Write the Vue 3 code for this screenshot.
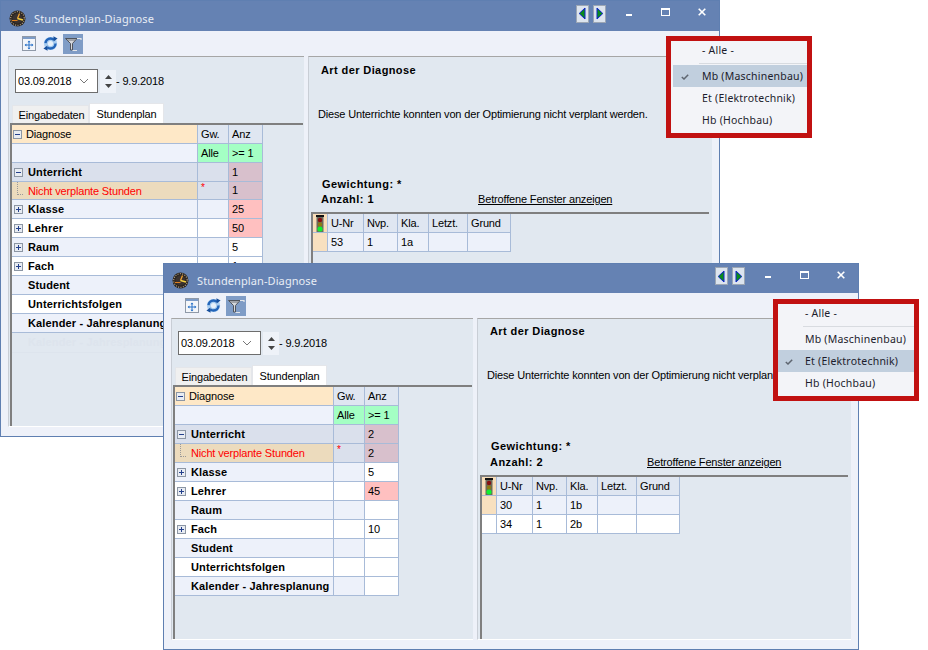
<template>
  <div class="desk">
    <div v-for="win in windows" :key="win.id" class="win" :class="win.id">
      <div class="titlebar">
        <svg class="logo" width="17" height="17" viewBox="0 0 17 17">
          <circle cx="8.5" cy="8.5" r="8" fill="#2b2520" />
          <circle cx="8.5" cy="8.5" r="6.8" fill="none" stroke="#b8a488" stroke-width="1.2" stroke-dasharray="1 1.4" />
          <circle cx="8.5" cy="8.5" r="5" fill="#3a3230" />
          <path d="M8.5 8.5 L10.5 3.5" stroke="#f0a030" stroke-width="1.3" />
          <path d="M8.5 8.5 L14 10" stroke="#f4d040" stroke-width="1.4" />
          <path d="M3 10.5 L8.5 10.5" stroke="#e08020" stroke-width="1" />
        </svg>
        <span class="title">Stundenplan-Diagnose</span>
        <button class="nav">
          <svg width="9" height="13" viewBox="0 0 9 13"><path d="M7 1 V12 L1.2 6.5 Z" fill="#0a8a1e" stroke="#1020d0" /></svg>
        </button>
        <button class="nav second">
          <svg width="9" height="13" viewBox="0 0 9 13"><path d="M2 1 V12 L7.8 6.5 Z" fill="#0a8a1e" stroke="#1020d0" /></svg>
        </button>
        <span class="ctl-min"></span>
        <span class="ctl-max"></span>
        <svg class="ctl-close" width="8" height="8" viewBox="0 0 8 8">
          <path d="M.7 .7 L7.3 7.3 M7.3 .7 L.7 7.3" stroke="#fff" stroke-width="1.6" />
        </svg>
      </div>

      <div class="toolbar">
        <svg class="tool" width="14" height="15" viewBox="0 0 14 15">
          <rect x=".5" y=".5" width="13" height="14" fill="#f4f6fa" stroke="#8f99a8" />
          <rect x="1" y="1" width="12" height="2" fill="#7d9cc8" />
          <path d="M7 5 V13 M3.2 9 H10.8" stroke="#2a72c8" />
          <path d="M7 4.4 L5.5 6.2 H8.5 Z M7 13.6 L5.5 11.8 H8.5 Z M2.6 9 L4.4 7.5 V10.5 Z M11.4 9 L9.6 7.5 V10.5 Z" fill="#2a72c8" />
        </svg>
        <svg class="tool refresh" width="15" height="15" viewBox="0 0 15 15">
          <circle cx="7.5" cy="7.5" r="6.6" fill="#a9cdf0" />
          <circle cx="7.5" cy="7.5" r="5" fill="none" stroke="#2364b8" stroke-width="2.4" stroke-dasharray="11 4.7" />
          <path d="M10.4 .2 L14.6 2.6 L10.6 5.6 Z M4.6 14.8 L.4 12.4 L4.4 9.4 Z" fill="#174f9c" />
          <circle cx="7.5" cy="7.5" r="2.6" fill="#e6f0fa" />
        </svg>
        <span class="tool-on">
          <svg width="18" height="18" viewBox="0 0 18 18">
            <path d="M1.5 3.5 H13 L8.5 8.5 V15 H6.5 V8.5 Z" fill="#d6d8dc" stroke="#50545c" />
            <path d="M13 3.5 H17 V5 M8.5 15.5 H13" fill="none" stroke="#e4e6ea" stroke-width="1.2" />
            <path d="M3 5 H11.5" stroke="#6a6e76" />
          </svg>
        </span>
      </div>

      <div class="panels">
        <div class="left">
          <div class="dates">
            <div class="combo">
              <span>03.09.2018</span>
              <svg width="10" height="6" viewBox="0 0 10 6"><path d="M1 1 L5 5 L9 1" fill="none" stroke="#777" /></svg>
            </div>
            <div class="spin">
              <svg width="7" height="4" viewBox="0 0 7 4"><path d="M3.5 0 L7 4 H0 Z" fill="#444" /></svg>
              <svg width="7" height="4" viewBox="0 0 7 4"><path d="M3.5 4 L7 0 H0 Z" fill="#444" /></svg>
            </div>
            <span>- 9.9.2018</span>
          </div>
          <div class="tabs">
            <div class="tab">Eingabedaten</div>
            <div class="tab active">Stundenplan</div>
          </div>
          <div class="tree-box">
            <table class="grid tree">
              <colgroup>
                <col class="col-name" />
                <col class="col-gw" />
                <col class="col-anz" />
              </colgroup>
              <tbody>
                <tr class="head">
                  <td class="c-name c-orange"><div class="name top"><span class="tog minus"></span>Diagnose</div></td>
                  <td class="c-soft">Gw.</td>
                  <td class="c-soft">Anz</td>
                </tr>
                <tr class="filter">
                  <td></td>
                  <td class="c-green">Alle</td>
                  <td class="c-green">&gt;= 1</td>
                </tr>
                <tr v-for="(row, i) in win.rows" :key="row.name + i" :class="[row.kind, { odd: i % 2 === 0 }]">
                  <td class="c-name">
                    <div class="name">
                      <span v-if="row.kind === 'child'" class="branch"></span>
                      <span v-else-if="row.tog" class="tog" :class="row.tog"></span>
                      <span v-else class="tog-gap"></span>
                      {{ row.name }}
                    </div>
                  </td>
                  <td class="c-gw">{{ row.gw }}</td>
                  <td class="c-anz" :class="{ hot: row.hot }">{{ row.anz }}</td>
                </tr>
              </tbody>
            </table>
            <div v-if="win.ghost" class="ghost-row">{{ win.ghost }}</div>
          </div>
        </div>

        <div class="right">
          <div class="r-title">Art der Diagnose</div>
          <div class="r-desc">Diese Unterrichte konnten von der Optimierung nicht verplant werden.</div>
          <div class="r-weight">Gewichtung: *</div>
          <div class="r-count">
            <span class="count-label">Anzahl: {{ win.count }}</span>
            <span class="link">Betroffene Fenster anzeigen</span>
          </div>
          <div class="result-box">
            <table class="grid result">
              <tbody>
                <tr class="rhead">
                  <td class="c-light">
                    <svg width="10" height="17" viewBox="0 0 10 17">
                      <rect x="1" y="0" width="8" height="2" fill="#111" />
                      <rect x="1.5" y="2" width="7" height="15" fill="#6a6a5c" />
                      <circle cx="5" cy="5" r="2.2" fill="#8a0f10" />
                      <circle cx="5" cy="9.5" r="2.2" fill="#8d7a12" />
                      <circle cx="5" cy="14" r="2.6" fill="#10f030" />
                    </svg>
                  </td>
                  <td v-for="h in resultHeads" :key="h">{{ h }}</td>
                </tr>
                <tr v-for="(r, i) in win.lessons" :key="r[0]" :class="{ odd: i % 2 === 0 }">
                  <td :class="{ 'c-mark': i === 0 }"></td>
                  <td>{{ r[0] }}</td>
                  <td>{{ r[1] }}</td>
                  <td>{{ r[2] }}</td>
                  <td></td>
                  <td></td>
                </tr>
              </tbody>
            </table>
          </div>
        </div>
      </div>

      <div class="callout">
        <div class="item first">- Alle -</div>
        <div class="sep"></div>
        <div v-for="m in departments" :key="m.code" class="item" :class="{ checked: m.code === win.dept }">
          <svg v-if="m.code === win.dept" class="tick" width="8" height="6" viewBox="0 0 8 6">
            <path d="M.8 3 L3 5 L7.2 .7" fill="none" stroke="#5f6670" stroke-width="1.5" />
          </svg>
          {{ m.label }}
        </div>
      </div>
    </div>
  </div>
</template>

<script setup>
const resultHeads = ['U-Nr', 'Nvp.', 'Kla.', 'Letzt.', 'Grund']

const departments = [
  { code: 'Mb', label: 'Mb (Maschinenbau)' },
  { code: 'Et', label: 'Et (Elektrotechnik)' },
  { code: 'Hb', label: 'Hb (Hochbau)' }
]

const makeRows = (unt, klasse, lehrer, raum, fach) => [
  { name: 'Unterricht', kind: 'group', tog: 'minus', anz: unt },
  { name: 'Nicht verplante Stunden', kind: 'child', gw: '*', anz: unt },
  { name: 'Klasse', tog: 'plus', anz: klasse.v, hot: klasse.hot },
  { name: 'Lehrer', tog: 'plus', anz: lehrer.v, hot: lehrer.hot },
  { name: 'Raum', tog: raum.tog, anz: raum.v },
  { name: 'Fach', tog: 'plus', anz: fach },
  { name: 'Student' },
  { name: 'Unterrichtsfolgen' },
  { name: 'Kalender - Jahresplanung' }
]

const windows = [
  {
    id: 'win-a',
    count: 1,
    dept: 'Mb',
    ghost: 'Kalender - Jahresplanung',
    rows: makeRows(1, { v: 25, hot: true }, { v: 50, hot: true }, { v: 5, tog: 'plus' }, 1),
    lessons: [['53', '1', '1a']]
  },
  {
    id: 'win-b',
    count: 2,
    dept: 'Et',
    rows: makeRows(2, { v: 5 }, { v: 45, hot: true }, { v: '', tog: '' }, 10),
    lessons: [
      ['30', '1', '1b'],
      ['34', '1', '2b']
    ]
  }
]
</script>

<style>
html,
body {
  margin: 0;
  background: #fff;
}
</style>

<style scoped>
.desk {
  position: relative;
  width: 928px;
  height: 650px;
  overflow: hidden;
  font-family: "Liberation Sans", Arial, sans-serif;
  font-size: 11px;
  letter-spacing: -0.16px;
  color: #000;
}

.win {
  position: absolute;
  box-sizing: border-box;
  display: flex;
  flex-direction: column;
  border: 1px solid #5f7fb1;
  background: #eef1f9;
}
.win-a {
  left: 0;
  top: 0;
  width: 720px;
  height: 437px;
}
.win-b {
  left: 163px;
  top: 263px;
  width: 696px;
  height: 387px;
}

.titlebar {
  height: 30px;
  flex: none;
  display: flex;
  align-items: center;
  background: #6582b3;
  padding-right: 13px;
}
.win-b .titlebar {
  height: 29px;
}
.logo {
  margin-left: 8px;
  margin-top: 4px;
}
.title {
  margin-left: 8px;
  flex: 1;
  color: #e8edf5;
  font-family: "Noto Sans", sans-serif;
  font-size: 11px;
  letter-spacing: 0.09px;
  margin-top: 4px;
}
.nav {
  box-sizing: border-box;
  width: 13px;
  height: 18px;
  padding: 0;
  margin-top: -5px;
  display: flex;
  align-items: center;
  justify-content: center;
  background: #dce4ee;
  border: 1px solid #9ca6b4;
}
.nav.second {
  margin-left: 4px;
}
.ctl-min {
  width: 6px;
  height: 2px;
  background: #fff;
  margin-left: 20px;
  margin-top: -3px;
}
.ctl-max {
  box-sizing: border-box;
  width: 9px;
  height: 8px;
  border: 1px solid #fff;
  border-top-width: 2px;
  margin-left: 29px;
  margin-top: -8px;
}
.ctl-close {
  margin-left: 28px;
  margin-top: -8px;
}

.toolbar {
  height: 25px;
  flex: none;
  display: flex;
  align-items: center;
  padding-left: 21px;
}
.tool.refresh {
  margin-left: 7px;
}
.tool-on {
  width: 20px;
  height: 20px;
  margin-left: 5px;
  display: flex;
  align-items: center;
  justify-content: center;
  background: #7f9cc6;
}

.panels {
  flex: 1;
  min-height: 0;
  display: flex;
  gap: 4px;
  padding: 0 7px 9px;
}
.left,
.right {
  box-sizing: border-box;
  background: #e1e8f0;
  border-top: 1px solid #a6a6a6;
  border-left: 1px solid #c9ced6;
  border-bottom: 1px solid #fff;
}
.left {
  display: flex;
  flex-direction: column;
  flex: none;
}
.win-a .left {
  width: 296px;
}
.win-b .left {
  width: 302px;
}
.right {
  flex: 1;
  min-width: 0;
  display: flex;
  flex-direction: column;
}

.dates {
  display: flex;
  align-items: center;
  gap: 2px;
  height: 24px;
  margin: 12px 0 0 6px;
  flex: none;
}
.combo {
  box-sizing: border-box;
  width: 83px;
  height: 24px;
  display: flex;
  align-items: center;
  justify-content: space-between;
  padding: 0 8px 0 2px;
  background: #fff;
  border: 1px solid #6d6d6d;
}
.spin {
  width: 16px;
  height: 23px;
  display: flex;
  flex-direction: column;
  align-items: center;
  justify-content: center;
  gap: 5px;
  background: #eef2f8;
  margin-right: -2px;
}

.tabs {
  display: flex;
  align-items: flex-end;
  height: 20px;
  margin: 10px 0 0 3px;
  flex: none;
}
.tab {
  box-sizing: border-box;
  height: 18px;
  width: 77px;
  padding-left: 2px;
  line-height: 18px;
  text-align: center;
  background: #f0f0f0;
  border: 1px solid #e4e6ea;
  border-bottom: 0;
}
.tab.active {
  height: 20px;
  width: 75px;
  padding-left: 0;
  line-height: 20px;
  background: #fff;
}

.tree-box {
  flex: 1;
  margin: 0 1px 0 1px;
  border-top: 2px solid #7f7f7f;
  border-left: 2px solid #7f7f7f;
}

.grid {
  border-collapse: separate;
  border-spacing: 0;
  table-layout: fixed;
}
.grid td {
  box-sizing: border-box;
  height: 19px;
  padding: 0 0 1px 3px;
  border-right: 1px solid #a8bbd8;
  border-bottom: 1px solid #a8bbd8;
  white-space: nowrap;
  overflow: hidden;
  background: #fff;
}
.col-gw {
  width: 31px;
}
.col-anz {
  width: 34px;
}
.win-a .col-name {
  width: 186px;
}
.win-b .col-name {
  width: 159px;
}
.win-a .tree {
  width: 251px;
}
.win-b .tree {
  width: 224px;
}
.win-a .grid tr.child td {
  height: 18px;
}

.grid td.c-orange {
  background: #fee8c7;
}
.grid td.c-soft {
  background: #dfe6f1;
}
.grid td.c-green {
  background: #a4ffc4;
}
.grid tr.filter td:first-child {
  background: #eef2fb;
}
.grid tr.odd td {
  background: #edf1fa;
}
.tree tr.odd .c-anz,
.tree tr:not(.odd) .c-anz {
  background: #fff;
}
.grid td.c-name {
  padding: 0;
}
.name {
  display: flex;
  align-items: center;
  height: 17px;
  font-weight: 700;
  letter-spacing: 0.14px;
}
.name.top {
  font-weight: 400;
  letter-spacing: -0.16px;
  padding-left: 1px;
}
.tog {
  position: relative;
  box-sizing: border-box;
  flex: none;
  width: 9px;
  height: 9px;
  margin: 1px 5px 0 2px;
  background: #e8ecf2;
  border: 1px solid #8c96a4;
}
.name.top .tog {
  margin: 1px 4px 0 0;
}
.tog::before {
  content: "";
  position: absolute;
  left: 1px;
  top: 3px;
  width: 5px;
  height: 1px;
  background: #24408c;
}
.tog.plus::after {
  content: "";
  position: absolute;
  left: 3px;
  top: 1px;
  width: 1px;
  height: 5px;
  background: #24408c;
}
.tog-gap {
  flex: none;
  width: 16px;
}
.branch {
  flex: none;
  box-sizing: border-box;
  width: 6px;
  height: 17px;
  margin: -9px 5px 0 5px;
  border-left: 1px dotted #999;
  border-bottom: 1px dotted #999;
}
.grid tr.group td {
  background: #dae0ec;
}
.grid tr.child td {
  background: #ecdbbd;
}
.child .name {
  color: #f00;
  font-weight: 400;
  letter-spacing: -0.16px;
}
.grid tr.child td.c-gw {
  background: #dae0ec;
  color: #f00;
  font-size: 10px;
  vertical-align: top;
}
.grid tr.group td.c-anz,
.grid tr.child td.c-anz {
  background: #d8c0cc;
}
.grid td.c-anz.hot,
.tree tr td.c-anz.hot {
  background: #ffc0c0;
}
.ghost-row {
  box-sizing: border-box;
  height: 20px;
  width: 186px;
  line-height: 18px;
  padding-left: 16px;
  font-weight: 700;
  letter-spacing: 0.14px;
  color: #dde4ed;
  border-bottom: 1px solid #dde4ed;
}

.r-title,
.r-desc,
.r-weight,
.r-count {
  line-height: 14px;
  flex: none;
}
.r-title {
  font-weight: 700;
  letter-spacing: 0.4px;
  margin: 6px 0 0 12px;
}
.win-b .r-title {
  margin-top: 5px;
}
.r-desc {
  margin: 30px 0 0 9px;
}
.r-weight {
  font-weight: 700;
  letter-spacing: 0.45px;
  margin: 56px 0 0 13px;
}
.win-b .r-weight {
  margin-top: 57px;
}
.r-count {
  display: flex;
  margin: 1px 0 0 12px;
}
.win-b .r-count {
  margin-top: 2px;
}
.count-label {
  width: 157px;
  font-weight: 700;
  letter-spacing: 0.45px;
}
.link {
  text-decoration: underline;
}

.result-box {
  flex: 1;
  margin: 6px 3px 0 2px;
  border-top: 2px solid #7f7f7f;
  border-left: 2px solid #7f7f7f;
}
.result {
  width: 197px;
}
.result td:nth-child(1) {
  width: 15px;
  padding: 0;
}
.result td:nth-child(2) {
  width: 36px;
}
.result td:nth-child(3) {
  width: 34px;
}
.result td:nth-child(4) {
  width: 31px;
}
.result td:nth-child(5) {
  width: 39px;
}
.result td:nth-child(6) {
  width: 43px;
}
.grid.result tr.rhead td {
  background: #dfe6f1;
}
.grid.result tr.rhead td.c-light {
  background: #f8ddb8;
  text-align: center;
  line-height: 0;
}
.grid.result tr td.c-mark {
  background: #f8e0bf;
}

.callout {
  position: absolute;
  top: 35px;
  box-sizing: border-box;
  width: 146px;
  height: 102px;
  padding-top: 1px;
  background: #f3f4f8;
  border: 5px solid #c11111;
  font-family: "Noto Sans", sans-serif;
  font-size: 10.5px;
  color: #1c1c2c;
  letter-spacing: 0.22px;
}
.win-a .callout {
  left: 665px;
}
.win-b .callout {
  left: 609px;
}
.item {
  position: relative;
  height: 22px;
  line-height: 22px;
  margin-left: 2px;
  padding-left: 29px;
  white-space: nowrap;
}
.win-b .item {
  margin-left: 0;
  padding-left: 27px;
}
.item.first {
  height: 21px;
  line-height: 16px;
}
.item.checked {
  background: #c1cfde;
}
.sep {
  height: 1px;
  margin: 0 0 1px 28px;
  background: #d8dbe0;
}
.win-b .sep {
  margin-left: 25px;
}
.tick {
  position: absolute;
  left: 8px;
  top: 9px;
}
.win-b .tick {
  left: 7px;
}
</style>
